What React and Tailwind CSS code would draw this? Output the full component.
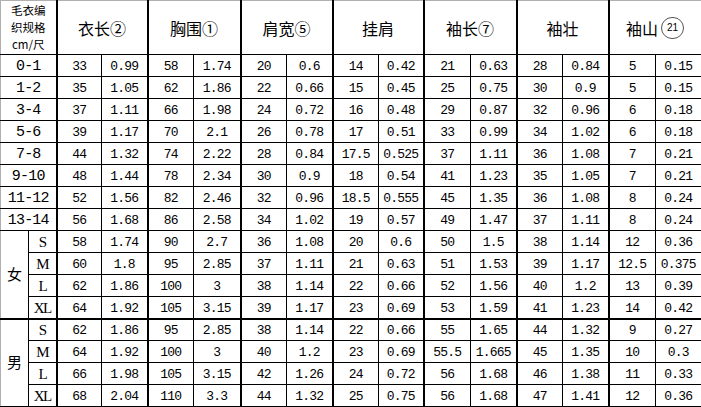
import React from "react";

const COLS = [28, 28, 45, 46, 46, 47, 46, 46, 46, 45, 47, 46, 46, 46, 47, 46];

const HEADERS = ["衣长②", "胸围①", "肩宽⑤", "挂肩", "袖长⑦", "袖壮"];

const KIDS = [
  ["0-1", "33", "0.99", "58", "1.74", "20", "0.6", "14", "0.42", "21", "0.63", "28", "0.84", "5", "0.15"],
  ["1-2", "35", "1.05", "62", "1.86", "22", "0.66", "15", "0.45", "25", "0.75", "30", "0.9", "5", "0.15"],
  ["3-4", "37", "1.11", "66", "1.98", "24", "0.72", "16", "0.48", "29", "0.87", "32", "0.96", "6", "0.18"],
  ["5-6", "39", "1.17", "70", "2.1", "26", "0.78", "17", "0.51", "33", "0.99", "34", "1.02", "6", "0.18"],
  ["7-8", "44", "1.32", "74", "2.22", "28", "0.84", "17.5", "0.525", "37", "1.11", "36", "1.08", "7", "0.21"],
  ["9-10", "48", "1.44", "78", "2.34", "30", "0.9", "18", "0.54", "41", "1.23", "35", "1.05", "7", "0.21"],
  ["11-12", "52", "1.56", "82", "2.46", "32", "0.96", "18.5", "0.555", "45", "1.35", "36", "1.08", "8", "0.24"],
  ["13-14", "56", "1.68", "86", "2.58", "34", "1.02", "19", "0.57", "49", "1.47", "37", "1.11", "8", "0.24"],
];

const WOMEN = [
  ["S", "58", "1.74", "90", "2.7", "36", "1.08", "20", "0.6", "50", "1.5", "38", "1.14", "12", "0.36"],
  ["M", "60", "1.8", "95", "2.85", "37", "1.11", "21", "0.63", "51", "1.53", "39", "1.17", "12.5", "0.375"],
  ["L", "62", "1.86", "100", "3", "38", "1.14", "22", "0.66", "52", "1.56", "40", "1.2", "13", "0.39"],
  ["XL", "64", "1.92", "105", "3.15", "39", "1.17", "23", "0.69", "53", "1.59", "41", "1.23", "14", "0.42"],
];

const MEN = [
  ["S", "62", "1.86", "95", "2.85", "38", "1.14", "22", "0.66", "55", "1.65", "44", "1.32", "9", "0.27"],
  ["M", "64", "1.92", "100", "3", "40", "1.2", "23", "0.69", "55.5", "1.665", "45", "1.35", "10", "0.3"],
  ["L", "66", "1.98", "105", "3.15", "42", "1.26", "24", "0.72", "56", "1.68", "46", "1.38", "11", "0.33"],
  ["XL", "68", "2.04", "110", "3.3", "44", "1.32", "25", "0.75", "56", "1.68", "47", "1.41", "12", "0.36"],
];

const cjk = "font-['Noto_Sans_CJK_SC',sans-serif]";
const mono = "font-['Liberation_Mono','DejaVu_Sans_Mono',monospace]";

function Values({ vals, top2, bottom2 }) {
  return vals.map((v, i) => (
    <td
      key={i}
      className={
        "border border-black p-0 text-center align-middle text-[13px] tracking-[-0.8px] leading-none pt-[2px] " +
        mono +
        (i % 2 === 0 ? " border-l-2" : "") +
        (i === vals.length - 1 ? " border-r-2" : "") +
        (top2 ? " border-t-2" : "") +
        (bottom2 ? " border-b-2" : "")
      }
    >
      {v}
    </td>
  ));
}

function GroupRows({ label, rows, top2, last }) {
  return rows.map((r, idx) => (
    <tr key={label + idx} className="h-[22px]">
      {idx === 0 && (
        <td
          rowSpan={rows.length}
          className={
            "border border-black border-l-[#b0b0b0] p-0 text-center align-middle text-[15px] " +
            cjk +
            (top2 ? " border-t-2" : "") +
            (last ? " border-b-2" : "")
          }
        >
          {label}
        </td>
      )}
      <td
        className={
          "border border-black p-0 text-center align-middle text-[15px] leading-none tracking-[-1.5px] font-['Liberation_Serif',serif] pt-[2px] " +
          (top2 && idx === 0 ? " border-t-2" : "") +
          (last && idx === rows.length - 1 ? " border-b-2" : "")
        }
      >
        {r[0]}
      </td>
      <Values
        vals={r.slice(1)}
        top2={top2 && idx === 0}
        bottom2={last && idx === rows.length - 1}
      />
    </tr>
  ));
}

export default function App() {
  return (
    <div className="w-[701px] h-[407px] bg-white text-black overflow-hidden">
      <table className="border-collapse table-fixed w-[701px]">
        <colgroup>
          {COLS.map((w, i) => (
            <col key={i} style={{ width: w }} />
          ))}
        </colgroup>
        <tbody>
          <tr className="h-[54px]">
            <td
              colSpan={2}
              className={
                "border border-black border-t-[#b0b0b0] border-l-[#b0b0b0] p-0 text-center align-middle text-[11.5px] " +
                cjk
              }
            >
              <div className="flex flex-col items-center">
                <span className="block h-[17px] leading-[17px]">毛衣编</span>
                <span className="block h-[17px] leading-[17px]">织规格</span>
                <span className="block h-[17px] leading-[17px]">cm/尺</span>
              </div>
            </td>
            {HEADERS.map((h) => (
              <td
                key={h}
                colSpan={2}
                className={
                  "border border-black border-l-2 border-t-[#b0b0b0] p-0 text-center align-middle text-[16px] " +
                  cjk
                }
              >
                {h}
              </td>
            ))}
            <td
              colSpan={2}
              className={
                "border border-black border-l-2 border-r-2 border-t-[#b0b0b0] p-0 align-middle text-[16px] " +
                cjk
              }
            >
              <div className="flex items-center justify-center gap-[3px]">
                <span>袖山</span>
                <span className="w-[23px] h-[22px] rounded-full border border-[#555] flex items-center justify-center text-[10px] leading-none font-['Liberation_Sans',sans-serif]">
                  21
                </span>
              </div>
            </td>
          </tr>
          {KIDS.map((r) => (
            <tr key={r[0]} className="h-[22px]">
              <td
                colSpan={2}
                className={
                  "border border-black border-l-[#b0b0b0] p-0 text-center align-middle text-[15px] leading-none tracking-[-0.8px] pt-[2px] " +
                  mono
                }
              >
                {r[0]}
              </td>
              <Values vals={r.slice(1)} />
            </tr>
          ))}
          <GroupRows label="女" rows={WOMEN} />
          <GroupRows label="男" rows={MEN} top2 last />
        </tbody>
      </table>
    </div>
  );
}
